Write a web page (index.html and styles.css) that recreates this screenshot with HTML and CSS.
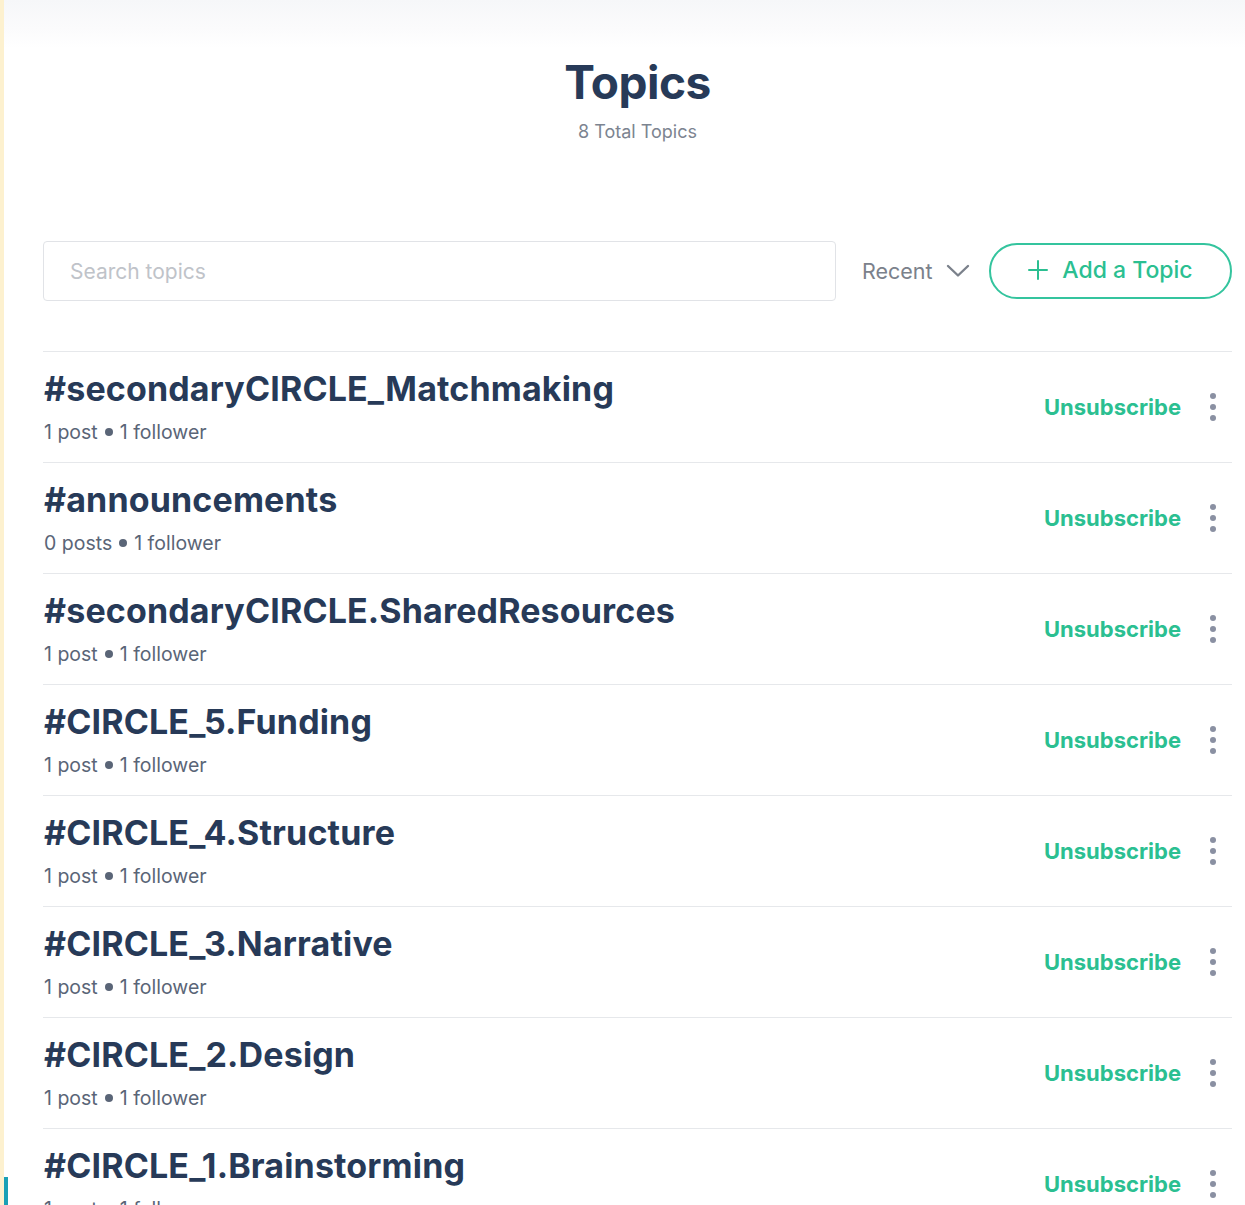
FILE: index.html
```html
<!DOCTYPE html>
<html lang="en">
<head>
<meta charset="utf-8">
<title>Topics</title>
<link rel="stylesheet" href="styles.css">
</head>
<body>
<div class="page">
  <div class="topfade"></div>
  <main class="content">
    <header class="head">
      <h1 class="title">Topics</h1>
      <div class="subtitle">8 Total Topics</div>
    </header>
    <div class="toolbar">
      <input class="search" type="text" placeholder="Search topics">
      <div class="sort">Recent
        <svg class="chev" width="24" height="14" viewBox="0 0 24 14"><path d="M2 2 L12 11.5 L22 2" fill="none" stroke="#7b818b" stroke-width="2.4" stroke-linecap="round" stroke-linejoin="round"/></svg>
      </div>
      <button class="add">
        <svg class="plus" width="20" height="20" viewBox="0 0 20 20"><path d="M10 1 V19 M1 10 H19" stroke="#2bbf91" stroke-width="2" stroke-linecap="round"/></svg>
        Add a Topic
      </button>
    </div>
    <ul class="list">
      <li class="row"><div class="info"><div class="name">#secondaryCIRCLE_Matchmaking</div><div class="meta">1 post <span class="dot"></span> 1 follower</div></div><div class="actions"><span class="unsub">Unsubscribe</span><span class="kebab"><i></i><i></i><i></i></span></div></li>
      <li class="row"><div class="info"><div class="name">#announcements</div><div class="meta">0 posts <span class="dot"></span> 1 follower</div></div><div class="actions"><span class="unsub">Unsubscribe</span><span class="kebab"><i></i><i></i><i></i></span></div></li>
      <li class="row"><div class="info"><div class="name">#secondaryCIRCLE.SharedResources</div><div class="meta">1 post <span class="dot"></span> 1 follower</div></div><div class="actions"><span class="unsub">Unsubscribe</span><span class="kebab"><i></i><i></i><i></i></span></div></li>
      <li class="row"><div class="info"><div class="name">#CIRCLE_5.Funding</div><div class="meta">1 post <span class="dot"></span> 1 follower</div></div><div class="actions"><span class="unsub">Unsubscribe</span><span class="kebab"><i></i><i></i><i></i></span></div></li>
      <li class="row"><div class="info"><div class="name">#CIRCLE_4.Structure</div><div class="meta">1 post <span class="dot"></span> 1 follower</div></div><div class="actions"><span class="unsub">Unsubscribe</span><span class="kebab"><i></i><i></i><i></i></span></div></li>
      <li class="row"><div class="info"><div class="name">#CIRCLE_3.Narrative</div><div class="meta">1 post <span class="dot"></span> 1 follower</div></div><div class="actions"><span class="unsub">Unsubscribe</span><span class="kebab"><i></i><i></i><i></i></span></div></li>
      <li class="row"><div class="info"><div class="name">#CIRCLE_2.Design</div><div class="meta">1 post <span class="dot"></span> 1 follower</div></div><div class="actions"><span class="unsub">Unsubscribe</span><span class="kebab"><i></i><i></i><i></i></span></div></li>
      <li class="row"><div class="info"><div class="name">#CIRCLE_1.Brainstorming</div><div class="meta">1 post <span class="dot"></span> 1 follower</div></div><div class="actions"><span class="unsub">Unsubscribe</span><span class="kebab"><i></i><i></i><i></i></span></div></li>
    </ul>
  </main>
  <div class="corner-tab"></div>
</div>
</body>
</html>
```
FILE: styles.css
```css
html, body {
  margin: 0;
  padding: 0;
  background: #ffffff;
  height: 100%;
  overflow: hidden;
}
body {
  font-family: Inter, "Noto Sans", "Liberation Sans", sans-serif;
  color: #273a58;
}
.page {
  position: relative;
  height: 1205px;
  border-left: 4px solid #fdf1cf;
  overflow: hidden;
}
.topfade {
  position: absolute;
  left: 0; right: 0; top: 0;
  height: 48px;
  background: linear-gradient(to bottom, #f6f7f9 0%, #fbfbfc 60%, #ffffff 100%);
}
.content {
  position: relative;
  padding: 0 13px 0 39px;
}
.head {
  display: flex;
  flex-direction: column;
  align-items: center;
  padding-top: 52px;
}
.title {
  margin: 0;
  font-size: 46px;
  line-height: 60px;
  font-weight: 700;
  color: #273a58;
  letter-spacing: -0.5px;
}
.subtitle {
  margin-top: 9px;
  font-size: 18px;
  line-height: 22px;
  color: #7c8490;
}
.toolbar {
  display: flex;
  align-items: center;
  margin-top: 98px;
  height: 60px;
}
.search {
  flex: 0 0 793px;
  box-sizing: border-box;
  height: 60px;
  border: 1.5px solid #e1e3e7;
  border-radius: 4px;
  padding: 0 0 0 26px;
  font-family: inherit;
  font-size: 21px;
  color: #273a58;
  outline: none;
}
.search::placeholder {
  color: #bfc3c9;
}
.sort {
  display: flex;
  align-items: center;
  gap: 13px;
  margin-left: 26px;
  font-size: 21.5px;
  color: #7b818b;
}
.add {
  margin-left: auto;
  box-sizing: border-box;
  width: 243px;
  height: 56px;
  border: 2px solid #34c49e;
  border-radius: 28px;
  background: #fff;
  display: flex;
  align-items: center;
  justify-content: center;
  gap: 14px;
  font-family: inherit;
  font-size: 23px;
  font-weight: 500;
  color: #2bbf91;
  padding: 0 0 2px;
}
.list {
  list-style: none;
  margin: 50px 0 0;
  padding: 0;
  border-top: 1.5px solid #e6e8eb;
}
.row {
  display: flex;
  align-items: center;
  justify-content: space-between;
  height: 110px;
  border-bottom: 1.5px solid #e6e8eb;
}
.info {
  align-self: flex-start;
  display: flex;
  flex-direction: column;
  padding: 17px 0 0 1px;
}
.name {
  font-size: 34px;
  line-height: 40px;
  font-weight: 700;
  color: #273a58;
  letter-spacing: 0.15px;
}
.meta {
  margin-top: 11px;
  font-size: 19.5px;
  line-height: 24px;
  color: #5a6577;
  display: flex;
  align-items: center;
  gap: 7px;
}
.dot {
  width: 8px;
  height: 8px;
  border-radius: 50%;
  background: #5a6577;
  display: inline-block;
}
.actions {
  display: flex;
  align-items: center;
  gap: 29px;
  padding-right: 16px;
}
.unsub {
  font-size: 22px;
  font-weight: 700;
  color: #2bbf91;
}
.kebab {
  display: flex;
  flex-direction: column;
  gap: 5px;
}
.kebab i {
  display: block;
  width: 6px;
  height: 6px;
  border-radius: 50%;
  background: #8a90a2;
}
.corner-tab {
  position: absolute;
  left: -4px;
  bottom: 0;
  width: 8px;
  height: 28px;
  background: #1aa0b6;
}
```
